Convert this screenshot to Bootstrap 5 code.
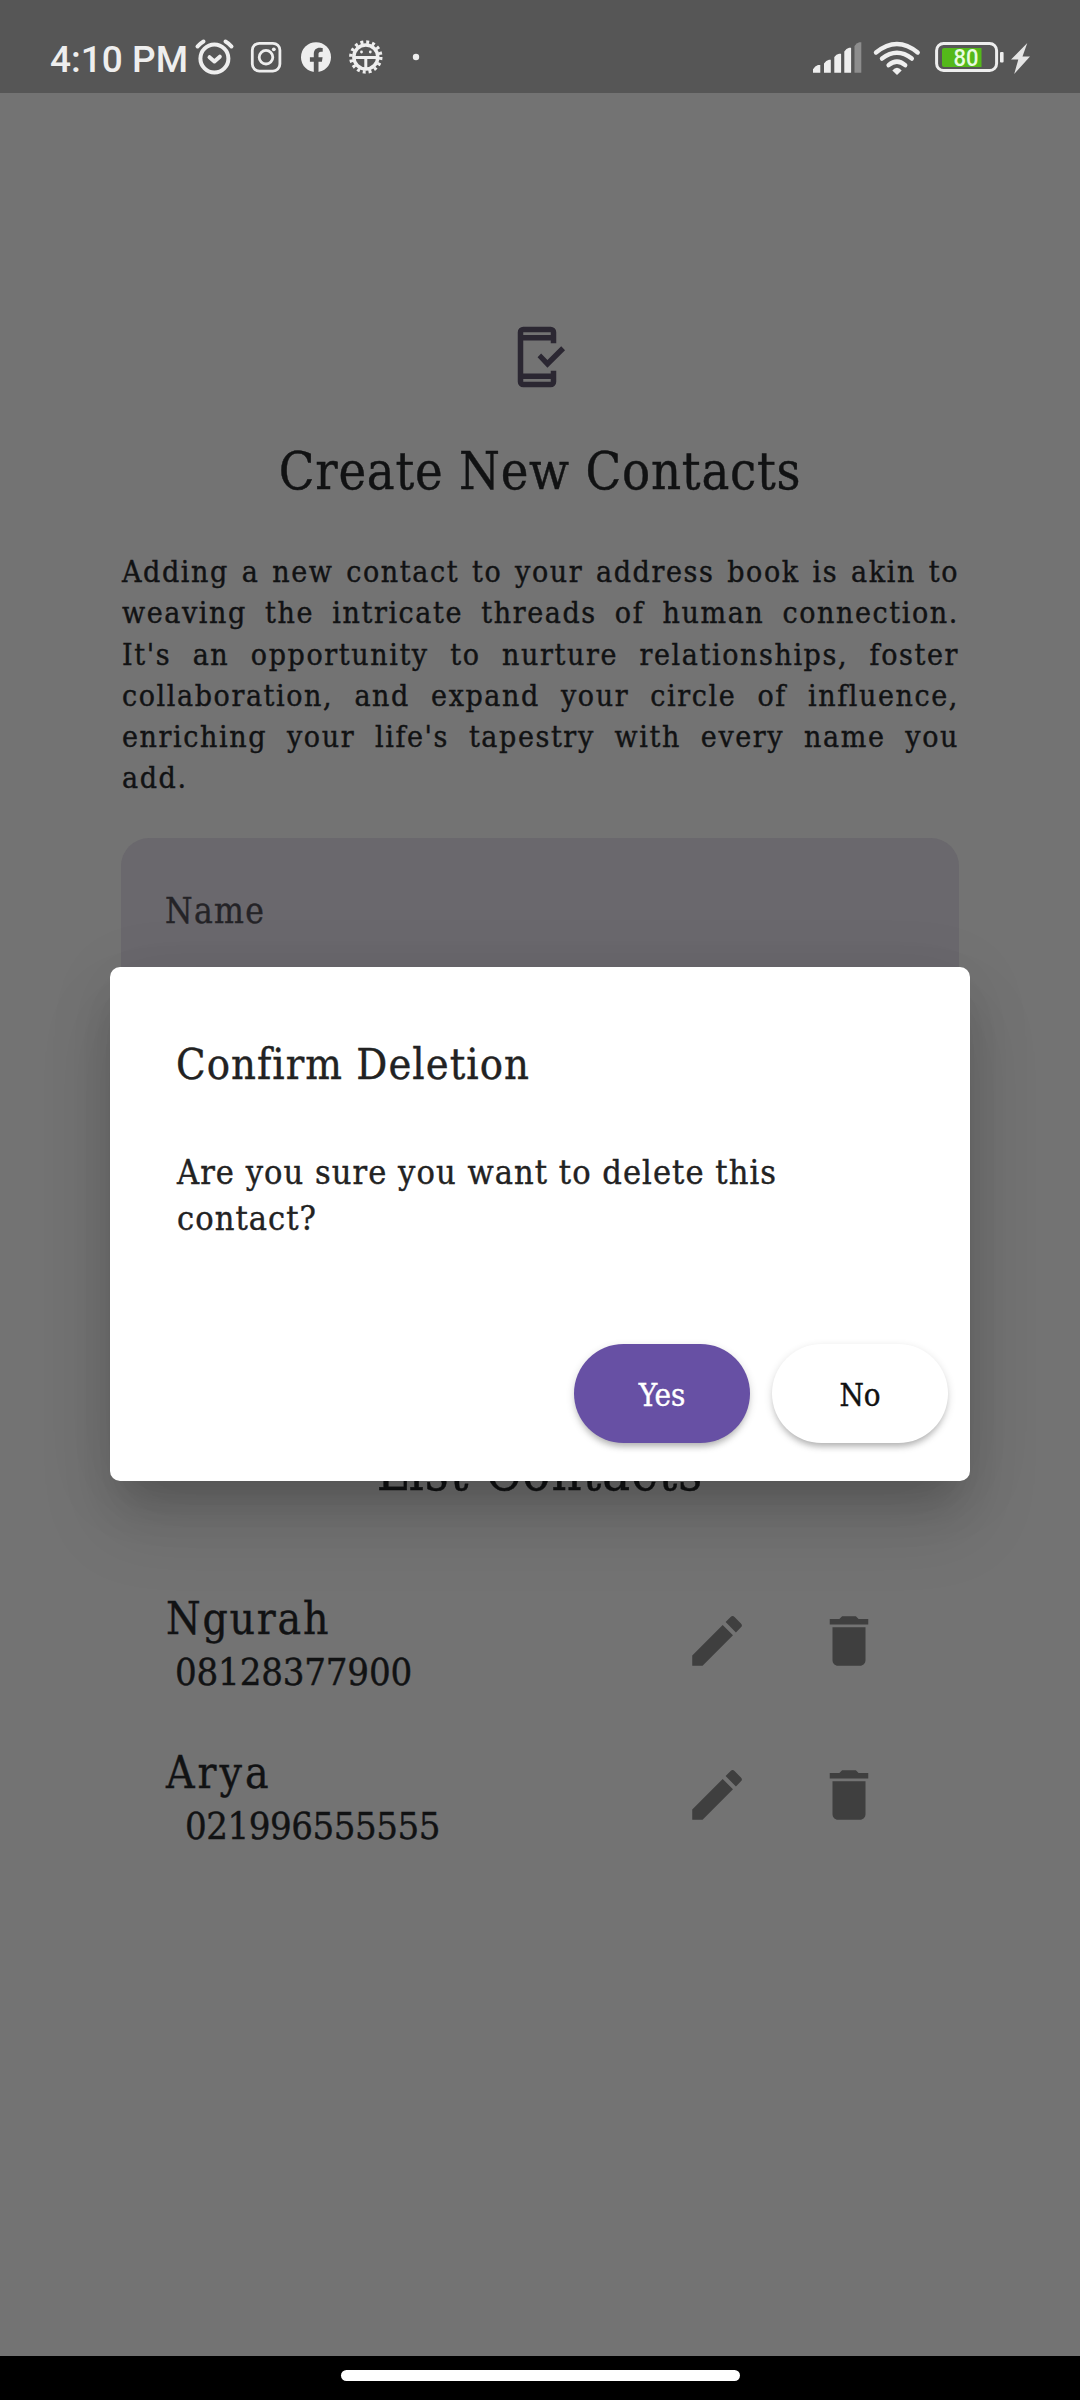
<!DOCTYPE html>
<html lang="en"><head><meta charset="utf-8"><title>Contacts</title>
<link rel="stylesheet" href="https://cdn.jsdelivr.net/npm/bootstrap@5.3.0/dist/css/bootstrap.min.css">
<style>
html,body{margin:0;background:#737373}
.screen{width:1080px;height:2400px;overflow:hidden;font-family:"Roboto Slab","DejaVu Serif Condensed","DejaVu Serif",serif;font-stretch:condensed;color:#111213;background:#737373;-webkit-text-stroke:.4px currentColor}
.statusbar{height:93px;background:#565656;flex:none;padding:0 40px 0 50px;color:#eee}
.clock{width:140px;padding-top:38px;font:500 37px/44px Roboto,sans-serif;white-space:nowrap;-webkit-text-stroke:0}
.statusbar svg{height:93px;flex:none}
.batt-level{font:500 24px Roboto,sans-serif;-webkit-text-stroke:0}
.page{width:838px;margin:0 auto;flex:1;padding-top:231px}
.page-icon{margin:0 0 0 383px}
.heading{font-size:52px;line-height:70px;letter-spacing:.75px;white-space:nowrap;text-align:center}
.heading-main{margin-top:46px}
.heading-list{letter-spacing:1px}
.intro{font-size:30px;line-height:41.3px;letter-spacing:1.6px;margin:45px 0 39px;padding:0 0 0 1px}
.intro span{display:block;text-align:justify;text-align-last:justify;white-space:nowrap}
.intro span:last-child{text-align-last:left}
.form-area{height:599px}
.field{height:146px;border-radius:28px 28px 0 0;background:#6a686d;font-size:35px;letter-spacing:1.4px;color:#242327;padding-left:44px}
.people{margin-top:82px}
.person{height:154px;padding:0 77px 0 45px}
.pname{font-size:44px;line-height:60px;letter-spacing:1.8px}
.pname-wide{letter-spacing:3px}
.pnum{font-size:38px;line-height:46px;letter-spacing:-.2px;padding-left:9px}
.pnum-long{padding-left:19px;letter-spacing:-.5px}
.tools{gap:66px;margin-top:19px}
.dialog{left:110px;top:967px;width:860px;height:514px;border-radius:10px;background:#fff;color:#222;padding:67px 22px 0 66px;box-shadow:0 30px 40px -14px rgba(0,0,0,.16),0 44px 76px 4px rgba(0,0,0,.09),0 10px 70px 0 rgba(0,0,0,.08)}
.dialog-title{font-size:43px;line-height:60px;letter-spacing:1.05px}
.dialog-text{font-size:34px;line-height:45.7px;letter-spacing:1.05px;margin:56px 0 103px;padding-left:1px}
.pill-row{gap:22px}
.pill{width:176px;height:99px;border-radius:50px;font-size:31px;padding:3px 0 0;box-shadow:0 6px 6px -3px rgba(0,0,0,.2),0 3px 8px rgba(0,0,0,.16)}
.pill-yes{background:#6750a4;color:#fff}
.pill-no{background:#fff;color:#111}
.navarea{height:44px;background:#000;flex:none;padding-top:14px}
.handle{width:399px;height:11px;border-radius:6px;background:#fff}
</style>
<script src="https://cdn.jsdelivr.net/npm/bootstrap@5.3.0/dist/js/bootstrap.bundle.min.js"></script>
</head><body>
<svg width="0" height="0" class="position-absolute"><defs>
<symbol id="pencil" viewBox="0 0 24 24"><path d="M3 17.25V21h3.75L17.81 9.94l-3.75-3.75L3 17.25zM20.71 7.04a1 1 0 0 0 0-1.41l-2.34-2.34a1 1 0 0 0-1.41 0l-1.83 1.83 3.75 3.75 1.83-1.83z"/></symbol>
<symbol id="bin" viewBox="0 0 24 24"><path d="M6 19c0 1.1.9 2 2 2h8c1.1 0 2-.9 2-2V7H6v12zM19 4h-3.5l-1-1h-5l-1 1H5v2h14V4z"/></symbol>
</defs></svg>
<div class="screen position-relative d-flex flex-column">
<header class="statusbar d-flex">
<div class="clock">4:10 PM</div>
<svg width="50" viewBox="190 0 50 93" fill="none" stroke="#eee" stroke-width="4" stroke-linecap="round" stroke-linejoin="round"><circle cx="214.4" cy="58.5" r="14"/><path d="M197.500 46.500Q200 43.500 203.500 41.500M225.500 41.500Q229 43.500 231.500 46.500"/><path d="m209.500 57.200 4.900 4.300 5.400-4.800"/></svg>
<svg width="51" viewBox="240 0 51 93" fill="none" stroke="#eee" stroke-width="2.8"><rect x="252.3" y="43.3" width="27.6" height="27.8" rx="7"/><circle cx="266" cy="57.2" r="6.8"/><circle cx="273.8" cy="49.3" r="1.9" fill="#eee" stroke="none"/></svg>
<svg width="50" viewBox="291 0 50 93"><circle cx="316" cy="57.2" r="15" fill="#eee"/><path d="M313.8 73V61.7h-3.9v-4.4h3.9v-3.4c0-4 2.4-6.1 5.9-6.1 1.5 0 3 .3 3 .3v3.7h-1.800c-1.800 0-2.400 1.100-2.400 2.300v3.200h4.100l-.7 4.400h-3.400V73z" fill="#565656"/></svg>
<svg width="50" viewBox="341 0 50 93" fill="none" stroke="#eee"><circle cx="365.8" cy="57" r="15" stroke-width="3.4" stroke-dasharray="2.950 2.940"/><circle cx="365.8" cy="57" r="12" stroke-width="3.4"/><path d="M354 57.500h23.500M365.800 57v12" stroke-width="3"/><circle cx="361.5" cy="52" r="1.4" fill="#eee" stroke="none"/><circle cx="370.3" cy="52" r="1.4" fill="#eee" stroke="none"/></svg>
<svg width="50" viewBox="391 0 50 93"><circle cx="416" cy="57" r="3.2" fill="#eee"/></svg>
<svg class="ms-auto" width="60" viewBox="806 0 60 93" fill="#eee"><path d="M813 72.8v-3.500q2-3.500 5-4.300h2.300v7.800zM824 72.800V63.500q2-3 5-3.700h1.800v13zM834.300 72.800V57q2-2.600 4.800-3.200h2v19zM844.300 72.800V51.500q2-3 4.800-3.700h2v25z"/><path d="M854.500 72.800V46q2-3 4.800-3.800h2v30.600z" fill="#8d8d8d"/></svg>
<svg width="61" viewBox="866 0 61 93" fill="none" stroke="#eee" stroke-width="4.4" stroke-linecap="round"><path d="M876 52.500Q897 35.500 917.700 52.500M882 58.600Q897 47 911.800 58.600M888.600 65.200Q897 58 905.200 65.200"/><path d="M892.300 70.500Q897 65 901.700 70.500L897 75z" fill="#eee" stroke="none"/></svg>
<svg width="80" viewBox="927 0 80 93"><rect x="936.6" y="43.4" width="60" height="27.2" rx="7" fill="none" stroke="#eee" stroke-width="3"/><path d="M944 48h37.500v19H944a2 2 0 0 1-2-2V50a2 2 0 0 1 2-2z" fill="#54b91a"/><rect x="1000" y="52" width="3.6" height="10.5" rx="1" fill="#eee"/><text class="batt-level" x="966" y="66.3" text-anchor="middle" textLength="25" lengthAdjust="spacingAndGlyphs" fill="#e8fbe0">80</text></svg>
<svg width="33" viewBox="1007 0 33 93"><path d="M1027.300 43 1011 59.500h7.300L1014.200 74 1030 56.500h-7.500z" fill="#e4e4e4"/></svg>
</header>
<main class="page">
<svg class="page-icon d-block" width="66" height="66" viewBox="0 0 24 24" fill="#2b2732"><path fill-rule="evenodd" d="M17 1H7a2 2 0 0 0-2 2v18a2 2 0 0 0 2 2h10a2 2 0 0 0 2-2v-4h-2v1H7V6h10v1h2V3a2 2 0 0 0-2-2zM7 3h10v1H7zM7 20h10v1H7z"/><path d="M15.8 15.9 12.2 12.1 13.5 10.7 15.8 13.1 20.8 8.1 22.2 9.5z"/></svg>
<div class="heading heading-main">Create New Contacts</div>
<p class="intro"><span>Adding a new contact to your address book is akin to </span><span>weaving the intricate threads of human connection. </span><span>It's an opportunity to nurture relationships, foster </span><span>collaboration, and expand your circle of influence, </span><span>enriching your life's tapestry with every name you </span><span>add.</span></p>
<div class="form-area"><div class="field d-flex align-items-center">Name</div></div>
<div class="heading heading-list">List Contacts</div>
<div class="people">
<div class="person d-flex justify-content-between align-items-start"><div><div class="pname">Ngurah</div><div class="pnum">08128377900</div></div><div class="tools d-flex"><svg width="66" height="66" fill="#3f3f3f"><use href="#pencil"/></svg><svg width="66" height="66" fill="#3f3f3f"><use href="#bin"/></svg></div></div>
<div class="person d-flex justify-content-between align-items-start"><div><div class="pname pname-wide">Arya</div><div class="pnum pnum-long">021996555555</div></div><div class="tools d-flex"><svg width="66" height="66" fill="#3f3f3f"><use href="#pencil"/></svg><svg width="66" height="66" fill="#3f3f3f"><use href="#bin"/></svg></div></div>
</div>
</main>
<footer class="navarea d-flex justify-content-center"><div class="handle"></div></footer>
<div class="dialog position-absolute" role="dialog">
<div class="dialog-title">Confirm Deletion</div>
<div class="dialog-text">Are you sure you want to delete this<br>contact?</div>
<div class="pill-row d-flex justify-content-end"><button class="pill pill-yes border-0">Yes</button><button class="pill pill-no border-0">No</button></div>
</div>
</div></body></html>
